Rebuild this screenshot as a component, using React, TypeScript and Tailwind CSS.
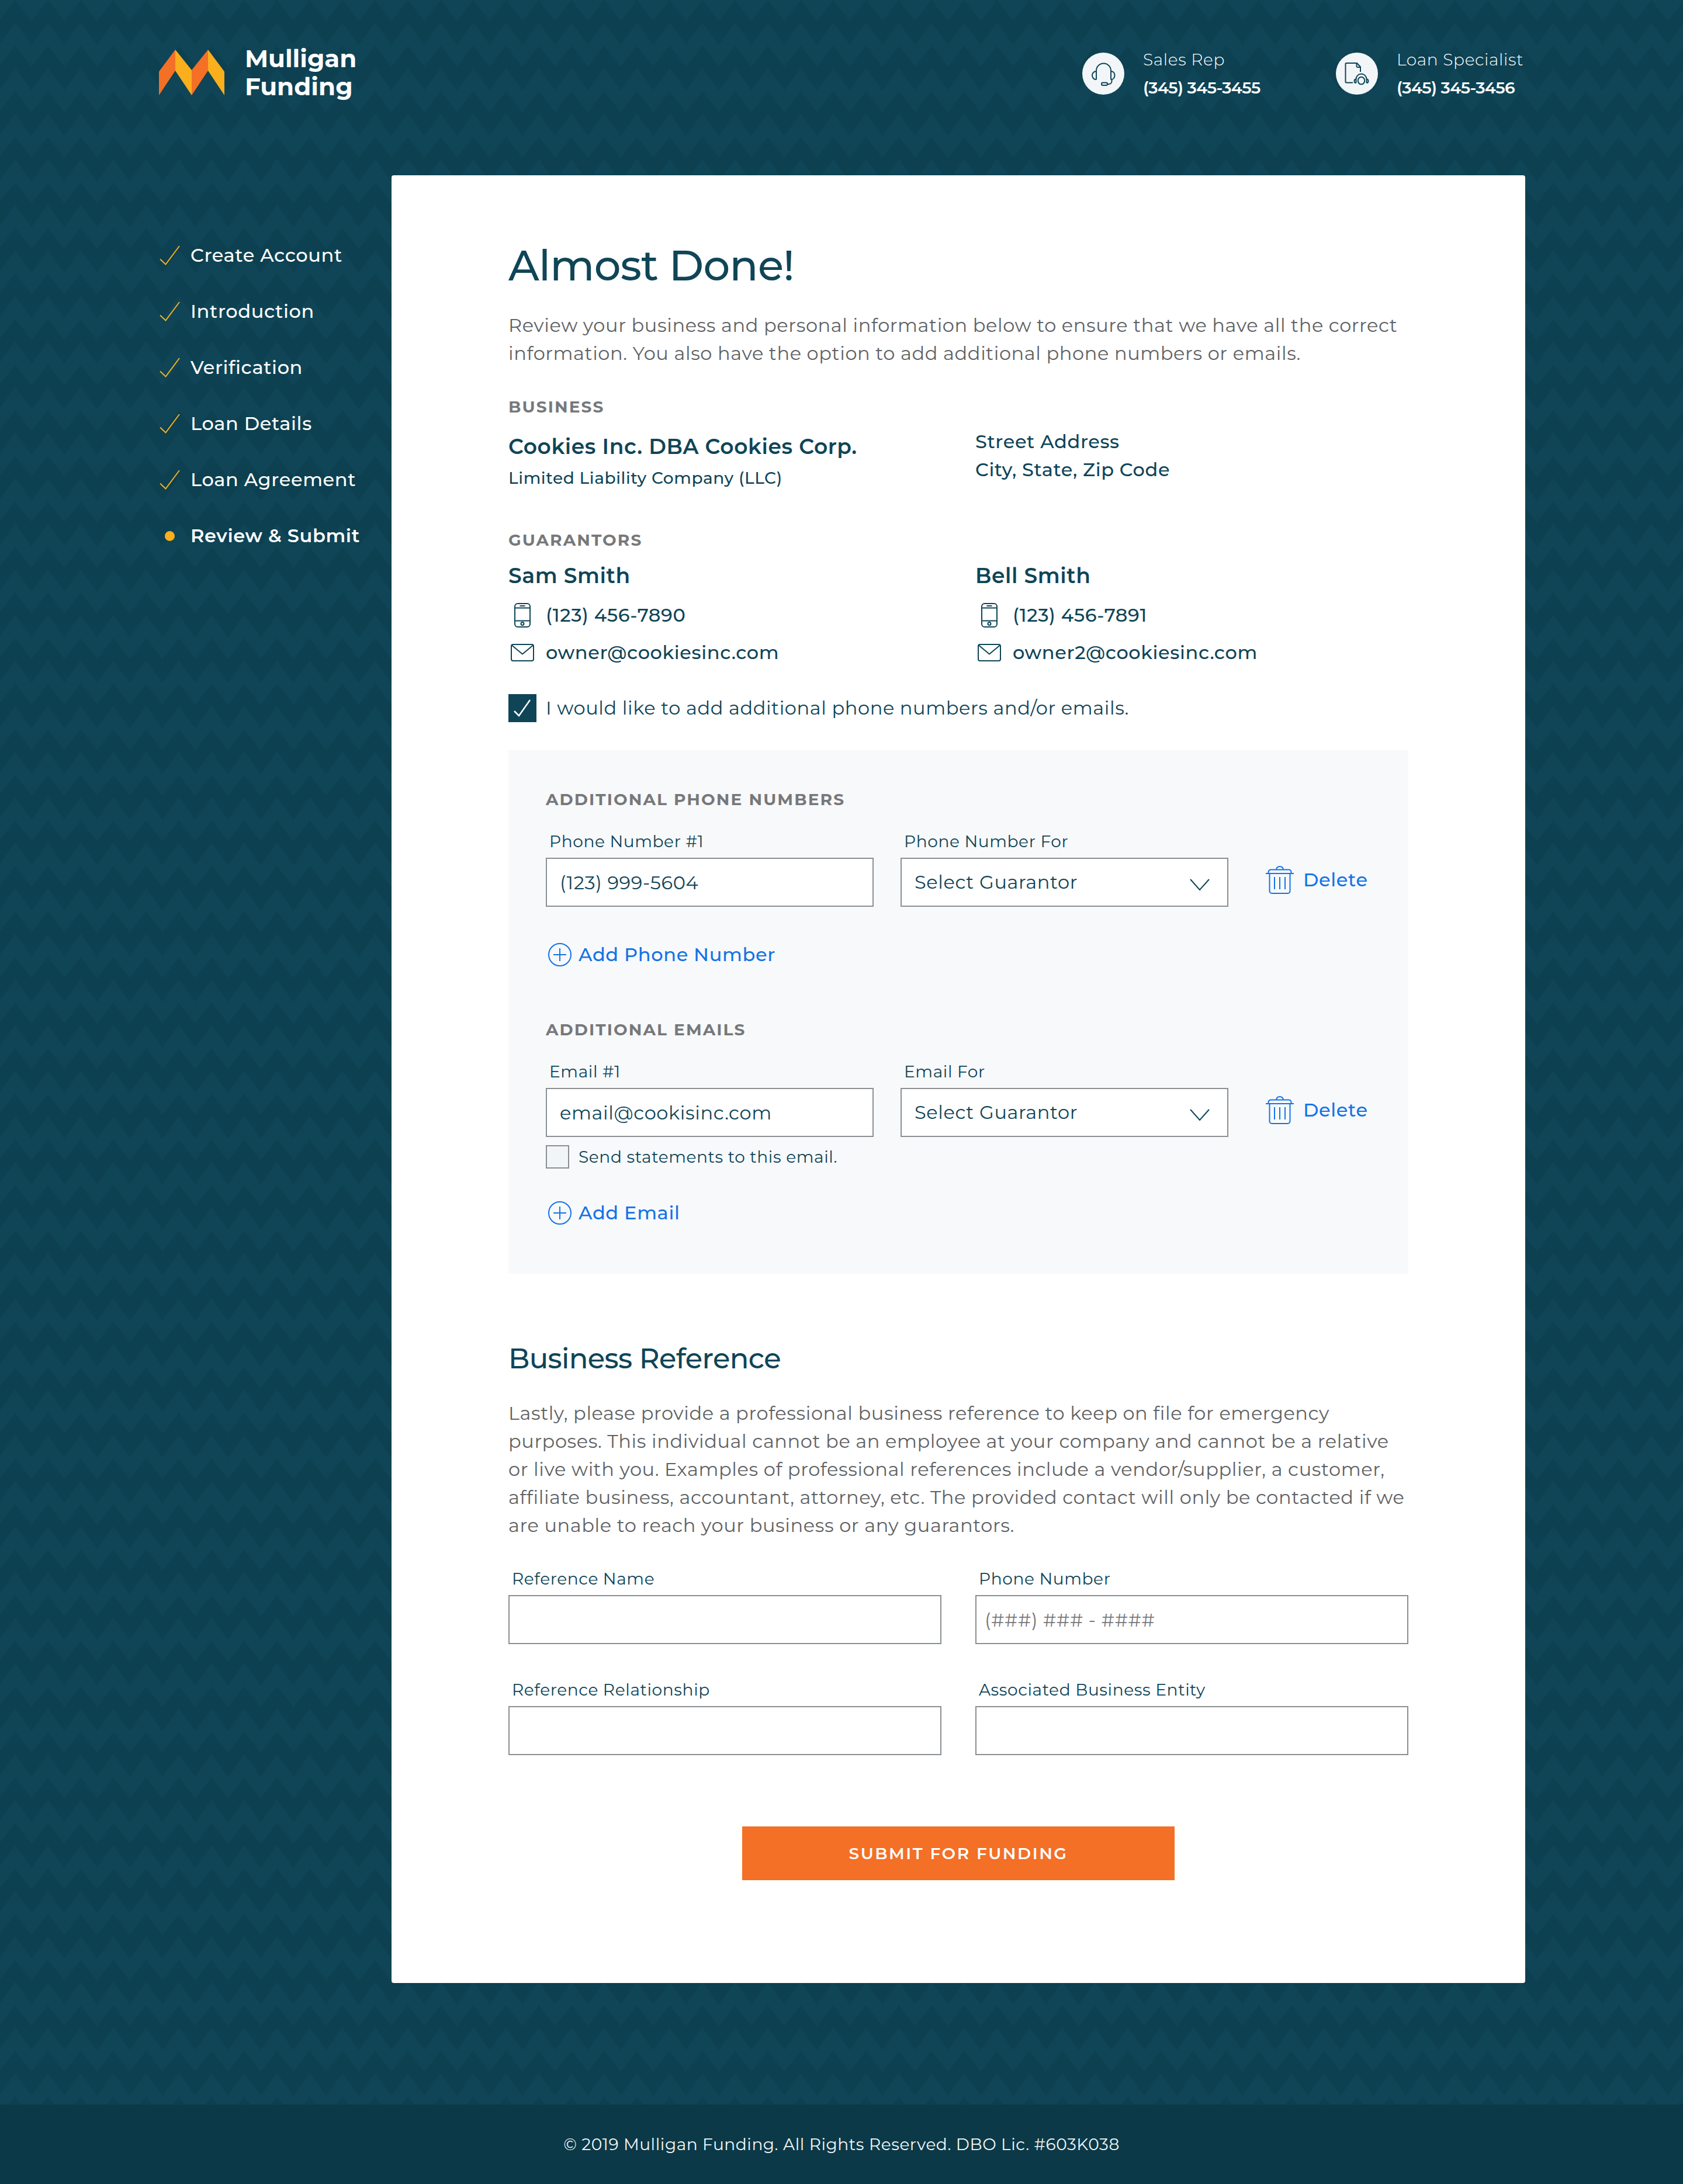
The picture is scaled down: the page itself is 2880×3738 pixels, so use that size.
import React, { useState } from "react";

function Chevrons() {
  return (
    <svg aria-hidden="true" className="absolute inset-0 h-full w-full">
      <defs>
        <pattern id="chevrons" width="56" height="78" patternUnits="userSpaceOnUse">
          <path
            d="M-2 36 L26 0 L54 36 L82 0 V39 L54 77 L26 38 L-2 77 Z"
            fill="#0d4050"
          />
        </pattern>
      </defs>
      <rect width="100%" height="100%" fill="url(#chevrons)" />
    </svg>
  );
}

function Logo() {
  return (
    <a href="#home" className="flex items-center gap-[35px] text-white">
      <svg aria-hidden="true" width="112" height="78" viewBox="0 0 112 78">
        <path d="M0 37.5 28 0v36L0 78Z" fill="#f37026" />
        <path d="M28 0 56 35v43L28 36Z" fill="#fbaf1c" />
        <path d="M56 35 84 0v36L56 78Z" fill="#f37026" />
        <path d="M84 0l28 37.5V78L84 36Z" fill="#fbaf1c" />
      </svg>
      <span className="text-[42px] leading-[48px] font-bold">
        Mulligan
        <br />
        Funding
      </span>
    </a>
  );
}

function HeadsetIcon() {
  return (
    <svg aria-hidden="true" className="size-[72px]" viewBox="0 0 72 72" fill="none" stroke="#0f4557" strokeWidth="2" strokeLinejoin="round">
      <circle cx="36" cy="36" r="36" fill="#f2f6f8" stroke="none" />
      <path d="M24 46V31a12.5 12.5 0 0 1 25 0v15" />
      <path d="M24 32c-4 0-7 3-7 7s3 7 6 7c1 0 1-.5 1-1M49 32c4 0 6.500 3 6.500 7s-2.500 7-5.500 7c-1 0-1-.5-1-1" />
      <path d="M50.500 46v3a5 5 0 0 1-5 5H43" />
      <rect x="33" y="51.500" width="10" height="4.500" rx="2" />
    </svg>
  );
}

function SpecialistIcon() {
  return (
    <svg aria-hidden="true" className="size-[72px]" viewBox="0 0 72 72" fill="none" stroke="#0f4557" strokeWidth="2" strokeLinejoin="round">
      <circle cx="36" cy="36" r="36" fill="#f2f6f8" stroke="none" />
      <path d="M29 51.500H18a1.500 1.500 0 0 1-1.500-1.500V19.500A1.500 1.500 0 0 1 18 18h18l6 6.500V33" />
      <path d="M35.500 18v5.500a1.500 1.500 0 0 0 1.500 1.500h5" />
      <path d="M34.500 52v-6.500a9 9 0 0 1 18 0V52" />
      <path d="M34.500 45.500c-2 0-3 1.500-3 3.300s1 3.200 3 3.200M52.500 45.500c2 0 3 1.500 3 3.300s-1 3.200-3 3.200" />
      <ellipse cx="43.500" cy="48" rx="5.700" ry="6.300" />
    </svg>
  );
}

function PhoneIcon() {
  return (
    <svg aria-hidden="true" width="28" height="42" viewBox="0 0 28 42" fill="none" stroke="#0f4557" strokeWidth="2">
      <rect x="1" y="1" width="26" height="40" rx="5" />
      <path d="M1 8.500h26M1 30.500h26" />
      <path d="M9.500 5h9" />
      <circle cx="14" cy="35.500" r="2.500" />
    </svg>
  );
}

function MailIcon() {
  return (
    <svg aria-hidden="true" width="40" height="30" viewBox="0 0 40 30" fill="none" stroke="#0f4557" strokeWidth="2" strokeLinejoin="round">
      <rect x="1" y="1" width="38" height="28" rx="3" />
      <path d="M2 2.500 20 17.500 38 2.500" />
    </svg>
  );
}

function TrashIcon() {
  return (
    <svg aria-hidden="true" width="48" height="48" viewBox="0 0 48 48" fill="none" stroke="currentColor" strokeWidth="2">
      <path d="M18 6.500C18.500 3 21 1 24 1s5.500 2 6 5.500" />
      <path d="M4.500 12.500v-2a4 4 0 0 1 4-4h31a4 4 0 0 1 4 4v2" />
      <path d="M0 13h48" />
      <path d="M6.500 13v30a4 4 0 0 0 4 4h27a4 4 0 0 0 4-4V13" />
      <path d="M15 19v21M24 19v21M33 19v21" />
    </svg>
  );
}

function PlusCircleIcon() {
  return (
    <svg aria-hidden="true" width="40" height="40" viewBox="0 0 40 40" fill="none" stroke="currentColor" strokeWidth="2">
      <circle cx="20" cy="20" r="19" />
      <path d="M9 20h22M20 9v22" />
    </svg>
  );
}

const steps = [
  "Create Account",
  "Introduction",
  "Verification",
  "Loan Details",
  "Loan Agreement",
];

function Contact({ icon, title, phone }: { icon: React.ReactNode; title: string; phone: string }) {
  return (
    <div className="flex items-center gap-8">
      {icon}
      <div className="w-[220px] text-[28px] leading-12 text-white">
        <div className="whitespace-nowrap font-light tracking-wide">{title}</div>
        <div className="whitespace-nowrap font-semibold tracking-[-0.02em]">{phone}</div>
      </div>
    </div>
  );
}

function SectionHeading({ children, className = "" }: { children: React.ReactNode; className?: string }) {
  return (
    <h2 className={`text-[28px] leading-10 font-bold tracking-[0.075em] text-[#77787a] uppercase ${className}`}>
      {children}
    </h2>
  );
}

function Guarantor({ name, phone, email }: { name: string; phone: string; email: string }) {
  return (
    <div>
      <h3 className="text-4xl leading-12 font-semibold">{name}</h3>
      <div className="mt-5 flex items-center gap-5 text-[32px] leading-12 font-medium">
        <span className="flex w-11 justify-end pr-1.5">
          <PhoneIcon />
        </span>
        {phone}
      </div>
      <div className="mt-4 flex items-center gap-5 text-[32px] leading-12 font-medium">
        <span className="flex w-11 justify-end">
          <MailIcon />
        </span>
        {email}
      </div>
    </div>
  );
}

function TextField({
  id,
  label,
  value,
  type = "text",
  placeholder,
  padding = "px-[22px]",
}: {
  id: string;
  label: string;
  value?: string;
  type?: string;
  placeholder?: string;
  padding?: string;
}) {
  return (
    <div className="min-w-0 flex-1">
      <label htmlFor={id} className="ml-1.5 block text-[28px] leading-10">
        {label}
      </label>
      <input
        id={id}
        type={type}
        defaultValue={value}
        placeholder={placeholder}
        className={`mt-2 block h-[84px] w-full border-2 border-[#8b8f91] bg-white text-[32px] leading-12 tracking-[0.02em] placeholder:text-[#77787a] ${padding}`}
      />
    </div>
  );
}

function GuarantorSelect({ id, label }: { id: string; label: string }) {
  return (
    <div className="min-w-0 flex-1">
      <label htmlFor={id} className="ml-1.5 block text-[28px] leading-10">
        {label}
      </label>
      <div className="relative mt-2">
        <select
          id={id}
          className="block h-[84px] w-full appearance-none border-2 border-[#8b8f91] bg-white px-[22px] text-[32px] leading-12 tracking-[0.02em]"
        >
          <option>Select Guarantor</option>
          <option>Sam Smith</option>
          <option>Bell Smith</option>
        </select>
        <svg
          aria-hidden="true"
          className="pointer-events-none absolute top-9 right-8"
          width="34"
          height="21"
          viewBox="0 0 34 21"
          fill="none"
          stroke="#0f4557"
          strokeWidth="2"
        >
          <path d="M1 1l16 18L33 1" />
        </svg>
      </div>
    </div>
  );
}

function DeleteButton() {
  return (
    <div className="flex w-[244px] flex-none self-end pb-[22px] pl-16">
      <button type="button" className="flex items-center gap-4 text-[32px] leading-12 font-medium tracking-[0.02em] text-[#1473e6]">
        <TrashIcon />
        Delete
      </button>
    </div>
  );
}

function AddButton({ children, className }: { children: React.ReactNode; className: string }) {
  return (
    <button
      type="button"
      className={`ml-1 flex items-center gap-3 text-[32px] leading-12 font-medium tracking-[0.02em] text-[#1473e6] ${className}`}
    >
      <PlusCircleIcon />
      {children}
    </button>
  );
}

export default function App() {
  const [extra, setExtra] = useState(true);

  return (
    <div className="relative isolate flex min-h-screen flex-col bg-[#0f4557] font-['Montserrat','Inter',sans-serif] text-[#0f4557]">
      <div className="absolute inset-0 -z-10">
        <Chevrons />
      </div>

      <header className="mx-auto flex h-[300px] w-full max-w-[2340px] items-start justify-between pt-[76px]">
        <div className="ml-0.5">
          <Logo />
        </div>
        <div className="flex gap-[110px] pt-0.5">
          <Contact icon={<HeadsetIcon />} title="Sales Rep" phone="(345) 345-3455" />
          <Contact icon={<SpecialistIcon />} title="Loan Specialist" phone="(345) 345-3456" />
        </div>
      </header>

      <div className="mx-auto flex w-full max-w-[2340px] flex-1 items-start pb-52">
        <nav aria-label="Progress" className="w-[400px] flex-none pt-[113px]">
          <ol className="flex flex-col gap-12 text-[32px] leading-12 tracking-[0.02em] text-white">
            {steps.map((step) => (
              <li key={step}>
                <a href="#step" className="flex items-center gap-[18px] font-medium">
                  <svg aria-hidden="true" width="38" height="34" viewBox="0 0 38 34" fill="none" stroke="#fbaf1c" strokeWidth="2">
                    <path d="M4 23.500 13.500 32.500 37 1" />
                  </svg>
                  {step}
                </a>
              </li>
            ))}
            <li>
              <a href="#step" aria-current="step" className="flex items-center gap-[18px] font-semibold">
                <span className="flex w-[38px] justify-center pl-0.5">
                  <span className="size-[17px] rounded-full bg-[#fbaf1c]" />
                </span>
                Review &amp; Submit
              </a>
            </li>
          </ol>
        </nav>

        <main className="min-w-0 flex-1 rounded bg-white px-50 pt-28 pb-44 text-[32px] leading-12 tracking-[0.019em]">
          <h1 className="text-7xl leading-[84px] font-medium tracking-[-0.01em]">Almost Done!</h1>
          <p className="mt-[37px] text-[#606264]">
            Review your business and personal information below to ensure that we have all the correct
            <br />
            information. You also have the option to add additional phone numbers or emails.
          </p>

          <SectionHeading className="mt-[47px]">Business</SectionHeading>
          <div className="mt-4 grid grid-cols-2 gap-x-[58px]">
            <div className="pt-2">
              <h3 className="text-4xl leading-12 font-semibold">Cookies Inc. DBA Cookies Corp.</h3>
              <p className="mt-2.5 text-[28px] leading-10 font-medium">Limited Liability Company (LLC)</p>
            </div>
            <address className="font-medium not-italic">
              Street Address
              <br />
              City, State, Zip Code
            </address>
          </div>

          <SectionHeading className="mt-[66px]">Guarantors</SectionHeading>
          <div className="mt-[17px] grid grid-cols-2 gap-x-[58px]">
            <Guarantor name="Sam Smith" phone="(123) 456-7890" email="owner@cookiesinc.com" />
            <Guarantor name="Bell Smith" phone="(123) 456-7891" email="owner2@cookiesinc.com" />
          </div>

          <label className="mt-[47px] flex items-center gap-4">
            <span className="relative size-12">
              <input
                type="checkbox"
                checked={extra}
                onChange={(e) => setExtra(e.target.checked)}
                className="block size-12 appearance-none border-2 border-[#0f4557] checked:bg-[#0f4557]"
              />
              <svg
                aria-hidden="true"
                className="pointer-events-none absolute inset-0 size-12"
                viewBox="0 0 48 48"
                fill="none"
                stroke="#ffffff"
                strokeWidth="2.500"
              >
                <path d="M10 29 18 37 37 10" />
              </svg>
            </span>
            I would like to add additional phone numbers and/or emails.
          </label>

          <section className="mt-12 bg-[#f8f9fb] px-16 pt-16 pb-20">
            <SectionHeading>Additional Phone Numbers</SectionHeading>
            <div className="mt-8 flex">
              <div className="flex flex-1 gap-[46px]">
                <TextField id="phone-1" label="Phone Number #1" type="tel" value="(123) 999-5604" />
                <GuarantorSelect id="phone-for" label="Phone Number For" />
              </div>
              <DeleteButton />
            </div>
            <AddButton className="mt-[58px]">Add Phone Number</AddButton>

            <SectionHeading className="mt-21">Additional Emails</SectionHeading>
            <div className="mt-8 flex">
              <div className="flex flex-1 gap-[46px]">
                <TextField id="email-1" label="Email #1" type="email" value="email@cookisinc.com" />
                <GuarantorSelect id="email-for" label="Email For" />
              </div>
              <DeleteButton />
            </div>
            <label className="mt-3.5 flex items-center gap-4 text-[28px] leading-10">
              <input type="checkbox" className="size-10 appearance-none border-2 border-[#8b8f91] bg-[#f1f5f6] checked:bg-[#0f4557]" />
              Send statements to this email.
            </label>
            <AddButton className="mt-13">Add Email</AddButton>
          </section>

          <h2 className="mt-[115px] text-5xl leading-[60px] font-medium tracking-[-0.013em]">Business Reference</h2>
          <p className="mt-10 text-[#606264]">
            Lastly, please provide a professional business reference to keep on file for emergency
            <br />
            purposes. This individual cannot be an employee at your company and cannot be a relative
            <br />
            or live with you. Examples of professional references include a vendor/supplier, a customer,
            <br />
            affiliate business, accountant, attorney, etc. The provided contact will only be contacted if we
            <br />
            are unable to reach your business or any guarantors.
          </p>

          <div className="mt-[47px] grid grid-cols-2 gap-[58px]">
            <TextField id="ref-name" label="Reference Name" />
            <TextField id="ref-phone" label="Phone Number" type="tel" placeholder="(###) ### - ####" padding="px-3.5" />
            <TextField id="ref-relationship" label="Reference Relationship" />
            <TextField id="ref-entity" label="Associated Business Entity" />
          </div>

          <button
            type="submit"
            className="mx-auto mt-[122px] block h-[92px] w-[740px] bg-[#f37026] text-[28px] leading-10 font-semibold tracking-[0.09em] text-white uppercase"
          >
            Submit for Funding
          </button>
        </main>
      </div>

      <footer className="bg-[#0b3947] py-12 text-center text-[28px] leading-10 tracking-[0.02em] text-[#f2f6f8]">
        © 2019 Mulligan Funding. All Rights Reserved. DBO Lic. #603K038
      </footer>
    </div>
  );
}
